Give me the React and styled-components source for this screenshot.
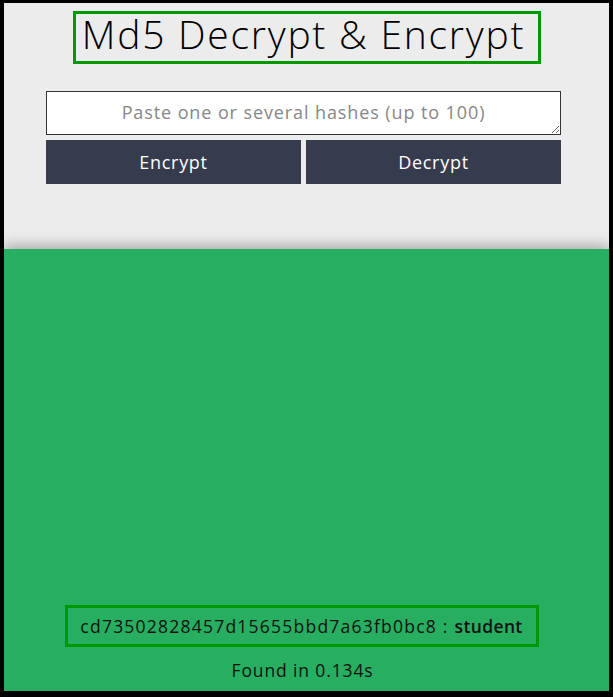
import React from 'react';
import styled, { createGlobalStyle } from 'styled-components';

const GlobalStyle = createGlobalStyle`
  html, body {
    margin: 0;
    padding: 0;
    background: #000;
  }
  body {
    font-family: "Open Sans", "Noto Sans", sans-serif;
  }
`;

const Frame = styled.div`
  box-sizing: border-box;
  height: 697px;
  border-style: solid;
  border-color: #000;
  border-width: 3px 4px 6px 4px;
  display: flex;
  flex-direction: column;
  background: #ececec;
`;

const Header = styled.header`
  height: 246px;
  flex-shrink: 0;
  background: #ececec;
  display: flex;
  flex-direction: column;
  align-items: center;
  padding-top: 8px;
  box-sizing: border-box;
`;

const Title = styled.h1`
  margin: 0;
  box-sizing: border-box;
  width: 468px;
  height: 53px;
  border: 3px solid #009a00;
  font-weight: 300;
  font-size: 39px;
  line-height: 40px;
  letter-spacing: 0.045em;
  color: #000;
  text-align: center;
  padding-right: 6px;
`;

const Form = styled.div`
  width: 515px;
  margin: 27px 6px 0 0;
  display: flex;
  flex-direction: column;
  gap: 5px;
`;

const HashInput = styled.textarea`
  box-sizing: border-box;
  width: 100%;
  height: 44px;
  border: 1px solid #333;
  background: #fff;
  font-family: inherit;
  font-size: 18px;
  letter-spacing: 0.05em;
  text-align: center;
  padding: 8px 10px 6px;
  resize: vertical;
  outline: none;
  &::placeholder {
    color: #878787;
  }
`;

const ButtonRow = styled.div`
  display: grid;
  grid-template-columns: 1fr 1fr;
  gap: 5px;
`;

const ActionButton = styled.button`
  height: 44px;
  border: 0;
  background: #363b4e;
  color: #fff;
  font-family: inherit;
  font-size: 18px;
  letter-spacing: 0.04em;
  cursor: pointer;
`;

const Results = styled.section`
  flex: 1;
  background: #27ae60;
  position: relative;
  box-shadow: 0 -4px 12px rgba(0, 0, 0, 0.28);
  display: flex;
  flex-direction: column;
  align-items: center;
  justify-content: flex-end;
  padding-bottom: 8px;
  color: #111;
`;

const Match = styled.div`
  box-sizing: border-box;
  width: 474px;
  height: 42px;
  border: 3px solid #009a00;
  margin-right: 10px;
  display: flex;
  align-items: center;
  justify-content: center;
  font-size: 17.5px;
  letter-spacing: 0.07em;
  white-space: nowrap;
  b {
    font-weight: 600;
    margin-left: 6px;
    letter-spacing: 0.02em;
  }
`;

const Timing = styled.div`
  margin-top: 10px;
  margin-right: 8px;
  font-size: 17.5px;
  letter-spacing: 0.05em;
  line-height: 26px;
`;

export default function App() {
  return (
    <>
      <GlobalStyle />
      <Frame>
        <Header>
          <Title>Md5 Decrypt &amp; Encrypt</Title>
          <Form>
            <HashInput placeholder="Paste one or several hashes (up to 100)" />
            <ButtonRow>
              <ActionButton>Encrypt</ActionButton>
              <ActionButton>Decrypt</ActionButton>
            </ButtonRow>
          </Form>
        </Header>
        <Results>
          <Match>
            cd73502828457d15655bbd7a63fb0bc8 :<b>student</b>
          </Match>
          <Timing>Found in 0.134s</Timing>
        </Results>
      </Frame>
    </>
  );
}
